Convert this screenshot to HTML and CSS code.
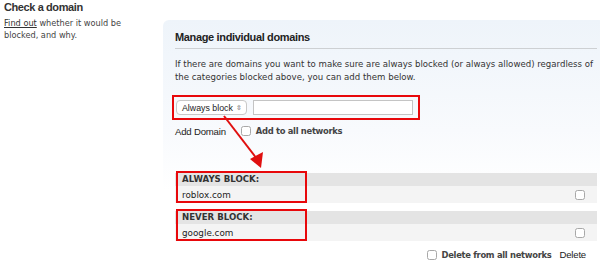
FILE: index.html
```html
<!DOCTYPE html>
<html lang="en">

<head>
    <meta charset="UTF-8">
    <title>Manage individual domains</title>
    <link rel="stylesheet" href="styles.css">
</head>

<body>
    <div class="page">
        <div class="sidebar">
            <h3>Check a domain</h3>
            <p><a href="#">Find out</a> whether it would be blocked, and why.</p>
        </div>

        <div class="panel">
            <h2 class="panel-title">Manage individual domains</h2>
            <p class="panel-intro">If there are domains you want to make sure are always blocked (or always allowed) regardless of the categories blocked above, you can add them below.</p>

            <div class="add-form highlight">
                <div class="select-box">Always block <span class="select-arrows">&#8691;</span></div>
                <input class="domain-input" type="text">
            </div>

            <div class="add-row">
                <span class="plain-button">Add Domain</span>
                <label class="check-label"><span class="checkbox"></span>Add to all networks</label>
            </div>

            <div class="domain-lists">
                <svg class="pointer-arrow" width="50" height="60" viewBox="0 0 50 60">
                    <line x1="1" y1="1" x2="34" y2="44" stroke="#e01010" stroke-width="2"/>
                    <polygon points="38,53 27,44 40,37" fill="#e01010"/>
                </svg>

                <div class="domain-group">
                    <div class="group-header">ALWAYS BLOCK:</div>
                    <div class="group-row">
                        <span>roblox.com</span>
                        <span class="checkbox"></span>
                    </div>
                    <span class="group-mark"></span>
                </div>

                <div class="domain-group">
                    <div class="group-header">NEVER BLOCK:</div>
                    <div class="group-row">
                        <span>google.com</span>
                        <span class="checkbox"></span>
                    </div>
                    <span class="group-mark"></span>
                </div>
            </div>

            <div class="delete-row">
                <label class="check-label"><span class="checkbox"></span>Delete from all networks</label>
                <span class="plain-button">Delete</span>
            </div>
        </div>
    </div>
</body>

</html>
```

FILE: styles.css
```css
* {
    margin: 0;
    padding: 0;
    box-sizing: border-box;
}

body {
    font-family: "DejaVu Sans", Verdana, sans-serif;
    font-size: 8.6px;
    color: #333;
    background: #fff;
}

.page {
    display: flex;
    align-items: flex-start;
}

.sidebar {
    width: 163px;
    flex-shrink: 0;
    padding: 1px 4px;
}

.sidebar h3 {
    font-family: "Liberation Sans", Arial, sans-serif;
    font-size: 11px;
    line-height: 13px;
    letter-spacing: -0.4px;
    font-weight: bold;
    color: #333;
    margin-bottom: 3px;
}

.sidebar p {
    width: 120px;
    font-size: 8.2px;
    line-height: 12px;
    color: #444;
}

.sidebar a {
    color: #333;
}

.panel {
    flex: 1;
    margin-top: 20px;
    padding: 11px 3px 0 12px;
    border-radius: 6px 0 0 0;
    background: linear-gradient(#eef4fa, #f8fafd 45%, #fff 70%);
    min-height: 244px;
}

.panel-title {
    font-family: "Liberation Sans", Arial, sans-serif;
    font-size: 11px;
    letter-spacing: -0.35px;
    font-weight: bold;
    color: #222;
    padding-bottom: 5px;
    border-bottom: 1px solid #cdd0d3;
    margin-bottom: 9px;
}

.panel-intro {
    line-height: 12.5px;
    color: #333;
    margin-bottom: 12px;
}

.highlight {
    border: 2px solid #e8080b;
}

.add-form {
    display: inline-flex;
    align-items: center;
    gap: 6px;
    width: 248px;
    padding: 3px 5px 3px 2px;
    margin-left: -3px;
}

.select-box {
    font-family: "Liberation Sans", Arial, sans-serif;
    font-size: 8.8px;
    color: #222;
    width: 72px;
    height: 15px;
    display: flex;
    align-items: center;
    justify-content: space-between;
    padding: 0 4px 0 5px;
    background: #fff;
    border: 1px solid #c8c8c8;
    border-radius: 4px;
}

.select-arrows {
    font-size: 7px;
    color: #555;
}

.domain-input {
    width: 160px;
    height: 15px;
    border: 1px solid #c4c4c4;
    background: #fff;
}

.add-row {
    display: flex;
    align-items: center;
    gap: 15px;
    margin-top: 5px;
    height: 12px;
}

.plain-button {
    font-family: "Liberation Sans", Arial, sans-serif;
    font-size: 9.6px;
    letter-spacing: -0.2px;
    color: #222;
}

.check-label {
    display: flex;
    align-items: center;
    gap: 5px;
    font-size: 8.4px;
    letter-spacing: -0.3px;
    font-weight: bold;
    color: #444;
}

.checkbox {
    display: inline-block;
    width: 10px;
    height: 10px;
    border: 1px solid #a8a8a8;
    border-radius: 2.5px;
    background: #fff;
}

.domain-lists {
    position: relative;
    margin-top: 36px;
}

.pointer-arrow {
    position: absolute;
    left: 48px;
    top: -58px;
}

.domain-group {
    position: relative;
    margin-bottom: 8px;
}

.group-header {
    background: #e4e4e4;
    font-weight: bold;
    color: #333;
    height: 13px;
    line-height: 13px;
    padding-left: 7px;
}

.group-row {
    background: #f4f4f4;
    height: 17px;
    display: flex;
    align-items: center;
    justify-content: space-between;
    padding: 0 12px 0 7px;
    font-size: 8.8px;
    color: #222;
}

.group-mark {
    position: absolute;
    left: 1px;
    top: -2px;
    width: 131px;
    height: 32px;
    border: 2px solid #e8080b;
}

.delete-row {
    display: flex;
    justify-content: flex-end;
    align-items: center;
    gap: 8px;
    margin-top: 6px;
    padding-right: 11px;
}
```
